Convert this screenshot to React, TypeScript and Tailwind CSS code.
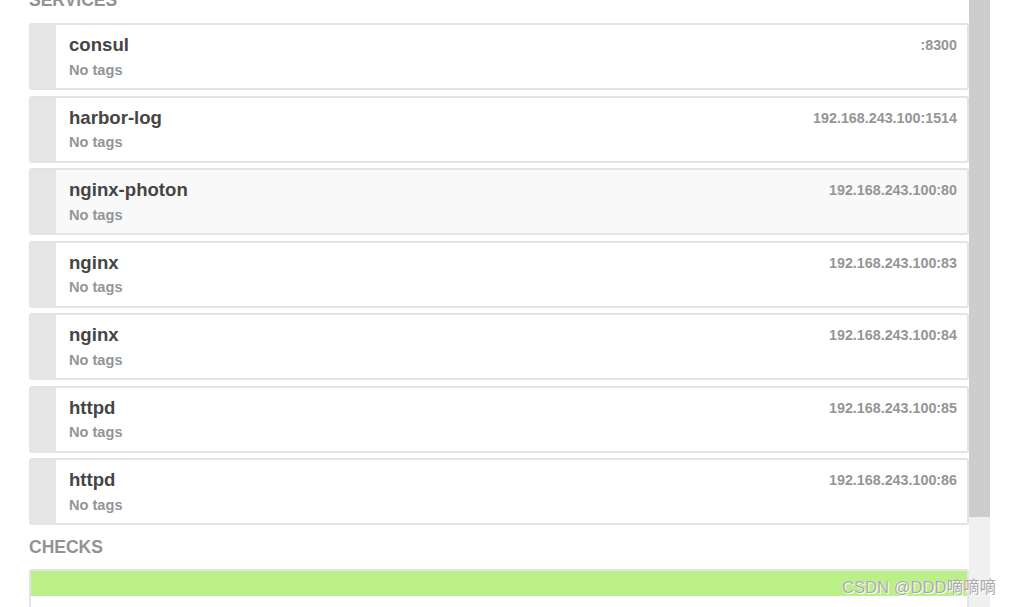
import React from "react";

const services = [
  { name: "consul", addr: ":8300", hover: false },
  { name: "harbor-log", addr: "192.168.243.100:1514", hover: false },
  { name: "nginx-photon", addr: "192.168.243.100:80", hover: true },
  { name: "nginx", addr: "192.168.243.100:83", hover: false },
  { name: "nginx", addr: "192.168.243.100:84", hover: false },
  { name: "httpd", addr: "192.168.243.100:85", hover: false },
  { name: "httpd", addr: "192.168.243.100:86", hover: false },
];

export default function App() {
  return (
    <div
      className="relative flex h-[607px] w-[1012px] overflow-hidden bg-white"
      style={{ fontFamily: '"Liberation Sans", Arial, sans-serif' }}
    >
      <div className="flex w-[969px] shrink-0 flex-col pl-[29px]">
        <h2 className="mt-[-10px] text-[17.5px] font-bold leading-[20px] text-[#929292]">
          SERVICES
        </h2>
        <div className="mt-[13px] flex flex-col gap-[5.5px]">
          {services.map((s, i) => (
            <div
              key={i}
              className={`flex h-[67px] shrink-0 rounded-[3px] border-2 border-[#e4e4e4] ${
                s.hover ? "bg-[#f9f9f9]" : "bg-white"
              }`}
            >
              <div className="w-[25px] shrink-0 bg-[#e6e6e6]" />
              <div className="flex flex-1 items-start justify-between pl-[13px] pr-[10px] pt-[9px]">
                <div className="flex flex-col">
                  <div className="text-[18.6px] font-bold leading-[22px] text-[#454545]">
                    {s.name}
                  </div>
                  <div className="mt-[4.5px] text-[14.6px] font-bold leading-[18px] text-[#959595]">
                    No tags
                  </div>
                </div>
                <div className="mt-[2px] text-[14.3px] font-bold leading-[18px] text-[#959595]">
                  {s.addr}
                </div>
              </div>
            </div>
          ))}
        </div>
        <h2 className="mt-[12px] text-[17.5px] font-bold leading-[20px] text-[#929292]">
          CHECKS
        </h2>
        <div className="mt-[12px] h-[200px] shrink-0 rounded-[3px] border-2 border-[#e4e4e4] bg-white">
          <div className="h-[25px] bg-[#bbef88]" />
        </div>
      </div>
      <div className="flex w-[21px] shrink-0 flex-col">
        <div className="h-[517px] bg-[#cdcdcd]" />
        <div className="flex-1 bg-[#f0f0f0]" />
      </div>
      <div className="flex-1 bg-white" />
      <div
        className="absolute left-[842px] top-[578px] whitespace-nowrap text-[16.6px] leading-[20px] text-[#a9a9a9]"
        style={{
          fontFamily: '"Liberation Sans", Arial, "Noto Sans CJK SC", sans-serif',
          textShadow: "0 0 1px #fff, 1px 1px 0 #fff",
        }}
      >
        CSDN @DDD嘀嘀嘀
      </div>
    </div>
  );
}
